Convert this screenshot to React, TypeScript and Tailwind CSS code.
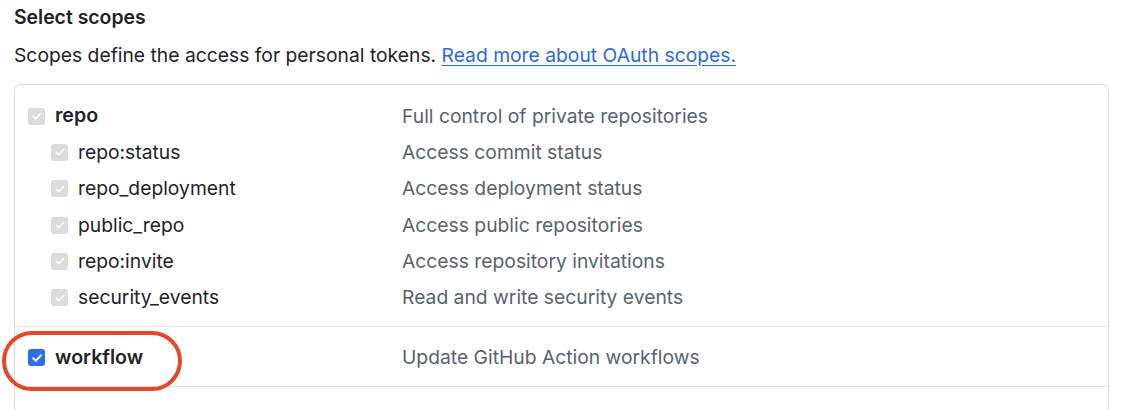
import React from "react";

type Scope = { name: string; desc: string };

const repoChildren: Scope[] = [
  { name: "repo:status", desc: "Access commit status" },
  { name: "repo_deployment", desc: "Access deployment status" },
  { name: "public_repo", desc: "Access public repositories" },
  { name: "repo:invite", desc: "Access repository invitations" },
  { name: "security_events", desc: "Read and write security events" },
];

function Check({ active }: { active?: boolean }) {
  return (
    <span
      className={
        "flex h-[17px] w-[17px] shrink-0 items-center justify-center rounded-[3px] " +
        (active ? "bg-[#2f6fe6]" : "bg-[#dcdcdc]")
      }
    >
      <svg width="12" height="12" viewBox="0 0 12 12" fill="none">
        <path
          d="M2.2 6.3 4.8 8.8 9.8 3.3"
          stroke="white"
          strokeWidth={active ? 2 : 1.6}
          strokeLinecap="round"
          strokeLinejoin="round"
          opacity={active ? 1 : 0.9}
        />
      </svg>
    </span>
  );
}

function Row({ scope, child, bold, active }: { scope: Scope; child?: boolean; bold?: boolean; active?: boolean }) {
  return (
    <div className="grid h-[36.3px] grid-cols-[387px_1fr] items-center">
      <div className={"flex items-center gap-[10px] " + (child ? "pl-[36px]" : "pl-[13px]")}>
        <Check active={active} />
        <span className={bold ? "text-[19.6px] font-semibold text-[#1f2328]" : "text-[#1f2328]"}>{scope.name}</span>
      </div>
      <div className="text-[#59636e]">{scope.desc}</div>
    </div>
  );
}

export default function App() {
  return (
    <div
      className="h-[410px] w-[1124px] overflow-hidden bg-white pl-[14px] pt-[3px] text-[19.3px]"
      style={{ fontFamily: "Inter, 'Noto Sans', sans-serif" }}
    >
      <h3 className="text-[19.4px] font-semibold leading-[28px] text-[#1f2328]">Select scopes</h3>
      <p className="mt-[10px] leading-[28px] text-[#1f2328]">
        Scopes define the access for personal tokens.{" "}
        <a className="text-[#2c6bd6] underline underline-offset-[3px]" href="#">
          Read more about OAuth scopes.
        </a>
      </p>

      <div className="relative mt-[15px] h-[330px] w-[1095px] rounded-t-[7px] border border-b-0 border-[#d8dee4]">
        <div className="pt-[13px] pb-[10px]">
          <Row scope={{ name: "repo", desc: "Full control of private repositories" }} bold />
          {repoChildren.map((s) => (
            <Row key={s.name} scope={s} child />
          ))}
        </div>
        <div className="border-t border-[#e1e6eb] pt-[13px] pb-[10px]">
          <Row scope={{ name: "workflow", desc: "Update GitHub Action workflows" }} bold active />
        </div>
        <div className="border-t border-[#e1e6eb]" />

        <div className="pointer-events-none absolute left-[-13px] top-[246px] h-[60px] w-[180px] rounded-[30px] border-4 border-[#e5472b]" />
      </div>
    </div>
  );
}
